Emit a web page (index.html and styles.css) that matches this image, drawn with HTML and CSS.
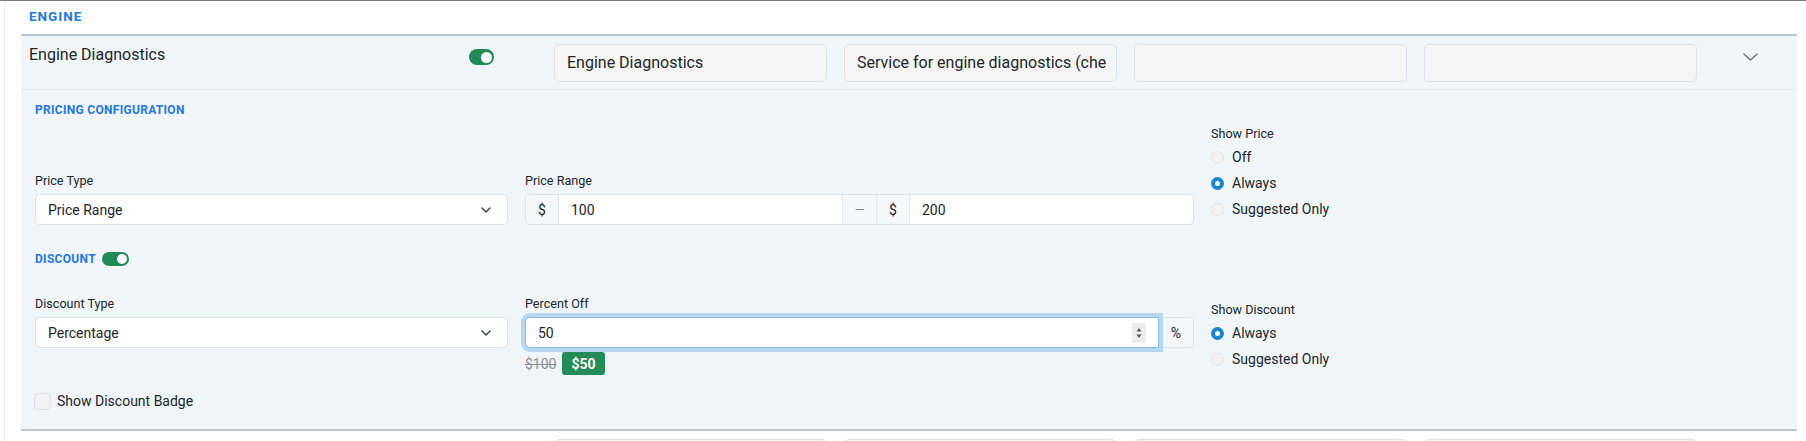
FILE: index.html
```html
<!DOCTYPE html>
<html lang="en">
<head>
<meta charset="utf-8">
<title>Engine</title>
<link rel="stylesheet" href="styles.css">
</head>
<body>
<div class="page">
  <div class="rail">
    <div class="category">ENGINE</div>

    <div class="item open">
      <div class="item-head">
        <div class="name-cell">
          <span class="item-name">Engine Diagnostics</span>
          <span class="switch"><span class="knob"></span></span>
        </div>
        <div class="head-input first"><span class="clip">Engine Diagnostics</span></div>
        <div class="head-input"><span class="clip">Service for engine diagnostics (che</span></div>
        <div class="head-input"><span class="clip"></span></div>
        <div class="head-input"><span class="clip"></span></div>
        <div class="head-chevron">
          <svg width="15" height="8" viewBox="0 0 15 8"><path d="M1 1 L7.5 7 L14 1" fill="none" stroke="#6c757d" stroke-width="1.6" stroke-linecap="round" stroke-linejoin="round"/></svg>
        </div>
      </div>

      <div class="item-body">
        <div class="section-title">PRICING CONFIGURATION</div>

        <div class="form-row pricing-row">
          <div class="field">
            <div class="lbl">Price Type</div>
            <div class="select">
              <span>Price Range</span>
              <svg width="10" height="6" viewBox="0 0 10 6"><path d="M1 1 L5 5 L9 1" fill="none" stroke="#343a40" stroke-width="1.4" stroke-linecap="round" stroke-linejoin="round"/></svg>
            </div>
          </div>
          <div class="field">
            <div class="lbl">Price Range</div>
            <div class="input-group">
              <span class="addon">$</span>
              <span class="cell">100</span>
              <span class="addon dash">—</span>
              <span class="addon">$</span>
              <span class="cell">200</span>
            </div>
          </div>
          <div class="field radios">
            <div class="lbl">Show Price</div>
            <div class="radio"><span class="dot"></span>Off</div>
            <div class="radio"><span class="dot checked"></span>Always</div>
            <div class="radio"><span class="dot"></span>Suggested Only</div>
          </div>
        </div>

        <div class="section-title discount-title">DISCOUNT <span class="switch small"><span class="knob"></span></span></div>

        <div class="form-row discount-row">
          <div class="field pad-hint">
            <div class="lbl">Discount Type</div>
            <div class="select">
              <span>Percentage</span>
              <svg width="10" height="6" viewBox="0 0 10 6"><path d="M1 1 L5 5 L9 1" fill="none" stroke="#343a40" stroke-width="1.4" stroke-linecap="round" stroke-linejoin="round"/></svg>
            </div>
          </div>
          <div class="field">
            <div class="lbl">Percent Off</div>
            <div class="pct-group">
              <div class="focus-input">
                <span>50</span>
                <span class="spinner">
                  <svg width="14" height="20" viewBox="0 0 14 20"><path d="M4.5 8.5 L7 5 L9.5 8.5 Z" fill="#555"/><path d="M4.5 11.5 L7 15 L9.5 11.5 Z" fill="#555"/></svg>
                </span>
              </div>
              <span class="addon pct">%</span>
            </div>
            <div class="hint">
              <span class="old">$100</span>
              <span class="badge">$50</span>
            </div>
          </div>
          <div class="field radios">
            <div class="lbl">Show Discount</div>
            <div class="radio"><span class="dot checked"></span>Always</div>
            <div class="radio"><span class="dot"></span>Suggested Only</div>
          </div>
        </div>

        <div class="check-row"><span class="checkbox"></span>Show Discount Badge</div>
      </div>
    </div>

    <div class="item">
      <div class="item-head">
        <div class="name-cell"></div>
        <div class="head-input first"></div>
        <div class="head-input"></div>
        <div class="head-input"></div>
        <div class="head-input"></div>
        <div class="head-chevron"></div>
      </div>
    </div>
  </div>
</div>
</body>
</html>
```

FILE: styles.css
```css
* { box-sizing: border-box; }

html, body {
  margin: 0;
  padding: 0;
  background: #ffffff;
}

body {
  font-family: Roboto, "Liberation Sans", Arial, sans-serif;
  color: #212529;
}

.page {
  border-top: 1px solid #7b7b7b;
  padding-left: 4px;
  height: 441px;
  overflow: hidden;
}

.rail {
  border-left: 1px solid #e8ecf1;
  padding-left: 16px;
  padding-right: 9px;
  min-height: 440px;
}

.category {
  padding: 7px 0 10px 8px;
  font-size: 13.5px;
  line-height: 16px;
  font-weight: 700;
  letter-spacing: 1px;
  color: #1f78e0;
}

.item {
  background: #ffffff;
}

.item.open {
  background: #f0f5fa;
  border-top: 2px solid #b9c5d4;
  border-bottom: 2px solid #b9c5d4;
}

.item-head {
  display: flex;
  align-items: flex-start;
  padding: 8px 0 7px 8px;
  border-bottom: 1px solid #e1e7ee;
  min-height: 53px;
}

.name-cell {
  width: 465px;
  display: flex;
  justify-content: space-between;
  align-items: flex-start;
  padding-top: 1px;
}

.item-name {
  font-size: 16px;
  line-height: 20px;
}

.switch {
  width: 25px;
  height: 16px;
  margin-top: 4px;
  border-radius: 8px;
  background: #1f8a55;
  display: flex;
  align-items: center;
  justify-content: flex-end;
  padding: 0 2px;
}

.switch .knob {
  width: 11px;
  height: 11px;
  border-radius: 50%;
  background: #ffffff;
}

.switch.small {
  width: 27px;
  height: 14px;
  margin-top: 0;
  margin-left: 6px;
  border-radius: 7px;
}

.switch.small .knob {
  width: 10px;
  height: 10px;
}

.head-input {
  width: 273px;
  height: 38px;
  margin-left: 17px;
  border: 1px solid #dde1e6;
  border-radius: 5px;
  background: #f5f5f5;
  padding: 0 10px 0 12px;
  font-size: 16px;
  line-height: 36px;
}

.head-input.first {
  margin-left: 60px;
}

.head-input .clip {
  display: block;
  overflow: hidden;
  white-space: nowrap;
}

.head-chevron {
  width: 15px;
  margin-left: 46px;
  margin-top: 9px;
  height: 8px;
}

.head-chevron svg {
  display: block;
}

.item-body {
  padding: 13px 0 19px 14px;
}

.section-title {
  font-size: 12px;
  line-height: 14px;
  font-weight: 700;
  letter-spacing: 0.3px;
  color: #1f78e0;
}

.discount-title {
  display: flex;
  align-items: center;
  height: 16px;
  line-height: 16px;
  margin-top: 26px;
}

.form-row {
  display: grid;
  grid-template-columns: 473px 669px 1fr;
  column-gap: 17px;
  align-items: end;
}

.pricing-row {
  margin-top: 9px;
}

.discount-row {
  margin-top: 29px;
}

.field.pad-hint {
  padding-bottom: 27px;
}

.lbl {
  font-size: 12.6px;
  line-height: 16px;
  margin-bottom: 5px;
}

.radios .lbl {
  margin-bottom: 2px;
}

.radios {
  padding-bottom: 3px;
}

.select {
  height: 31px;
  border: 1px solid #dde2e8;
  border-radius: 5px;
  background: #ffffff;
  display: flex;
  align-items: center;
  justify-content: space-between;
  padding: 0 16px 0 12px;
  font-size: 14px;
}

.select svg {
  display: block;
}

.input-group {
  height: 31px;
  display: flex;
  border: 1px solid #dde2e8;
  border-radius: 5px;
  background: #ffffff;
  overflow: hidden;
  font-size: 14px;
}

.addon {
  width: 33px;
  flex: none;
  display: flex;
  align-items: center;
  justify-content: center;
  background: #f5f7fa;
  border-right: 1px solid #e2e6eb;
  font-size: 14px;
  color: #212529;
}

.addon.dash {
  width: 35px;
  border-left: 1px solid #e2e6eb;
  color: #7a8088;
  font-size: 12px;
}

.cell {
  flex: 1;
  display: flex;
  align-items: center;
  padding-left: 12px;
}

.pct-group {
  height: 31px;
  display: flex;
}

.focus-input {
  position: relative;
  z-index: 1;
  flex: 1;
  display: flex;
  align-items: center;
  justify-content: space-between;
  padding: 0 12px 0 12px;
  background: #ffffff;
  border: 1px solid #86bde3;
  border-radius: 5px 0 0 5px;
  box-shadow: 0 0 0 4px #b6d8ef;
  font-size: 14px;
}

.spinner {
  width: 14px;
  height: 20px;
  background: #ececec;
  display: block;
}

.spinner svg {
  display: block;
}

.addon.pct {
  width: 35px;
  border: 1px solid #dde2e8;
  border-left: none;
  border-radius: 0 5px 5px 0;
  background: #f3f6f9;
}

.hint {
  margin-top: 4px;
  height: 23px;
  display: flex;
  align-items: center;
}

.old {
  font-size: 14px;
  color: #8a9097;
  text-decoration: line-through;
}

.badge {
  margin-left: 6px;
  height: 23px;
  padding: 0 9px;
  border-radius: 3px;
  background: #228b57;
  color: #ffffff;
  font-size: 14px;
  font-weight: 700;
  display: flex;
  align-items: center;
}

.radio {
  height: 26px;
  display: flex;
  align-items: center;
  gap: 8px;
  font-size: 14px;
}

.dot {
  width: 13px;
  height: 13px;
  border-radius: 50%;
  background: #f2f2f2;
  border: 1px solid #e0e2e5;
  flex: none;
}

.dot.checked {
  background: #ffffff;
  border: 4px solid #1a86d0;
}

.check-row {
  margin-top: 17px;
  height: 18px;
  display: flex;
  align-items: center;
  gap: 6px;
  font-size: 14px;
  margin-left: -1px;
}

.checkbox {
  width: 17px;
  height: 17px;
  border-radius: 4px;
  background: #f2f2f2;
  border: 1px solid #dcdfe3;
}
```
